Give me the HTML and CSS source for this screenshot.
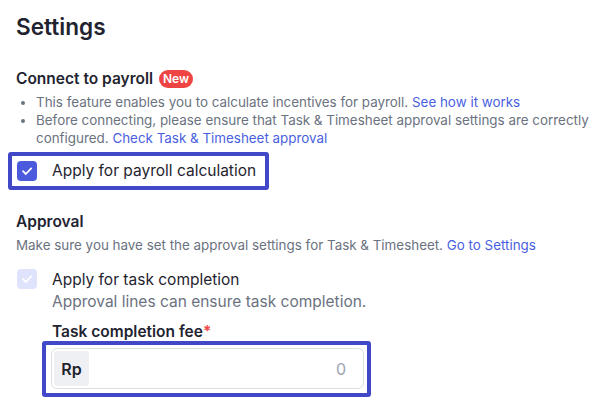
FILE: index.html
```html
<!DOCTYPE html>
<html lang="en">
<head>
<meta charset="utf-8">
<title>Settings</title>
<link rel="stylesheet" href="styles.css">
</head>
<body>
<main class="page">
  <h1 class="title">Settings</h1>

  <section class="section">
    <h2 class="section-title">Connect to payroll <span class="badge">New</span></h2>
    <ul class="notes">
      <li>This feature enables you to calculate incentives for payroll. <a class="link" href="#">See how it works</a></li>
      <li>Before connecting, please ensure that Task &amp; Timesheet approval settings are correctly configured. <a class="link" href="#">Check Task &amp; Timesheet approval</a></li>
    </ul>
    <div class="highlight highlight-row">
      <label class="check-row">
        <span class="checkbox checkbox-on">
          <svg viewBox="0 0 20 20" width="20" height="20"><path d="M6 10.2l2.8 2.8L14.2 7.4" fill="none" stroke="#fff" stroke-width="1.8" stroke-linecap="round" stroke-linejoin="round"/></svg>
        </span>
        <span class="check-label">Apply for payroll calculation</span>
      </label>
    </div>
  </section>

  <section class="section approval">
    <h2 class="section-title">Approval</h2>
    <p class="desc">Make sure you have set the approval settings for Task &amp; Timesheet. <a class="link" href="#">Go to Settings</a></p>
    <div class="check-row task-row">
      <span class="checkbox checkbox-disabled">
        <svg viewBox="0 0 20 20" width="20" height="20"><path d="M6 10.2l2.8 2.8L14.2 7.4" fill="none" stroke="#fff" stroke-width="1.8" stroke-linecap="round" stroke-linejoin="round"/></svg>
      </span>
      <div class="check-text">
        <div class="check-label">Apply for task completion</div>
        <div class="check-hint">Approval lines can ensure task completion.</div>
      </div>
    </div>
    <div class="field">
      <div class="field-label">Task completion fee<span class="req">*</span></div>
      <div class="highlight highlight-field">
        <div class="input">
          <span class="prefix">Rp</span>
          <span class="value">0</span>
        </div>
      </div>
    </div>
  </section>
</main>
</body>
</html>
```

FILE: styles.css
```css
* { box-sizing: border-box; }

html, body {
  margin: 0;
  padding: 0;
  background: #ffffff;
}

body {
  font-family: "Inter", "Noto Sans", "Liberation Sans", sans-serif;
  color: #1f2937;
}

.page {
  padding: 0 10px 0 16px;
}

.title {
  margin: 13px 0 0;
  font-size: 22.6px;
  line-height: 28px;
  font-weight: 600;
  color: #1f2430;
}

.section-title {
  margin: 28px 0 0;
  font-size: 15.5px;
  line-height: 20px;
  font-weight: 600;
  color: #1f2430;
  display: flex;
  align-items: center;
  gap: 6px;
}

.badge {
  display: inline-flex;
  align-items: center;
  justify-content: center;
  height: 18px;
  width: 34px;
  border-radius: 9px;
  background: #ef4444;
  color: #ffffff;
  font-size: 12px;
  font-weight: 600;
  line-height: 18px;
}

.notes {
  margin: 4px 0 0;
  padding-left: 20px;
  font-size: 13.4px;
  line-height: 18px;
  color: #6b7280;
}

.link {
  color: #4a5fe0;
  text-decoration: none;
}

.highlight {
  border: 4px solid #4048c8;
  border-radius: 3px;
}

.highlight-row {
  display: flex;
  width: fit-content;
  margin: 5px 0 0 -8px;
  padding: 4px 9px 4px 4px;
}

.check-row {
  display: flex;
  align-items: flex-start;
  gap: 15px;
}

.checkbox {
  flex: none;
  width: 20px;
  height: 20px;
  margin: 1px 0 0 1px;
  border-radius: 4px;
  display: flex;
}

.checkbox-on { background: #4b5bdc; }
.checkbox-disabled { background: #dfe3fc; margin-top: 0; }

.check-label {
  font-size: 15.5px;
  line-height: 22px;
  color: #1f2430;
}

.check-hint {
  font-size: 15.5px;
  line-height: 22px;
  color: #6b7280;
}

.approval .section-title {
  margin-top: 22px;
}

.desc {
  margin: 4px 0 0;
  font-size: 13.4px;
  line-height: 18px;
  color: #6b7280;
}

.task-row {
  margin-top: 15px;
}

.field {
  margin-top: 10px;
  padding-left: 36px;
}

.field-label {
  font-size: 15.5px;
  line-height: 18px;
  font-weight: 600;
  color: #1f2430;
}

.req { color: #ef4444; }

.highlight-field {
  width: 329px;
  margin-left: -10px;
  padding: 3px 3px 4px 5px;
}

.input {
  display: flex;
  align-items: center;
  height: 41px;
  padding: 2px;
  border: 1px solid #dcdfe4;
  border-radius: 6px;
  background: #ffffff;
}

.prefix {
  width: 35px;
  height: 35px;
  display: flex;
  align-items: center;
  justify-content: center;
  background: #eef0f3;
  border-radius: 3px;
  font-size: 16px;
  font-weight: 600;
  color: #1f2430;
}

.value {
  flex: 1;
  text-align: right;
  padding-right: 15px;
  font-size: 16px;
  color: #9ca3af;
}
```
